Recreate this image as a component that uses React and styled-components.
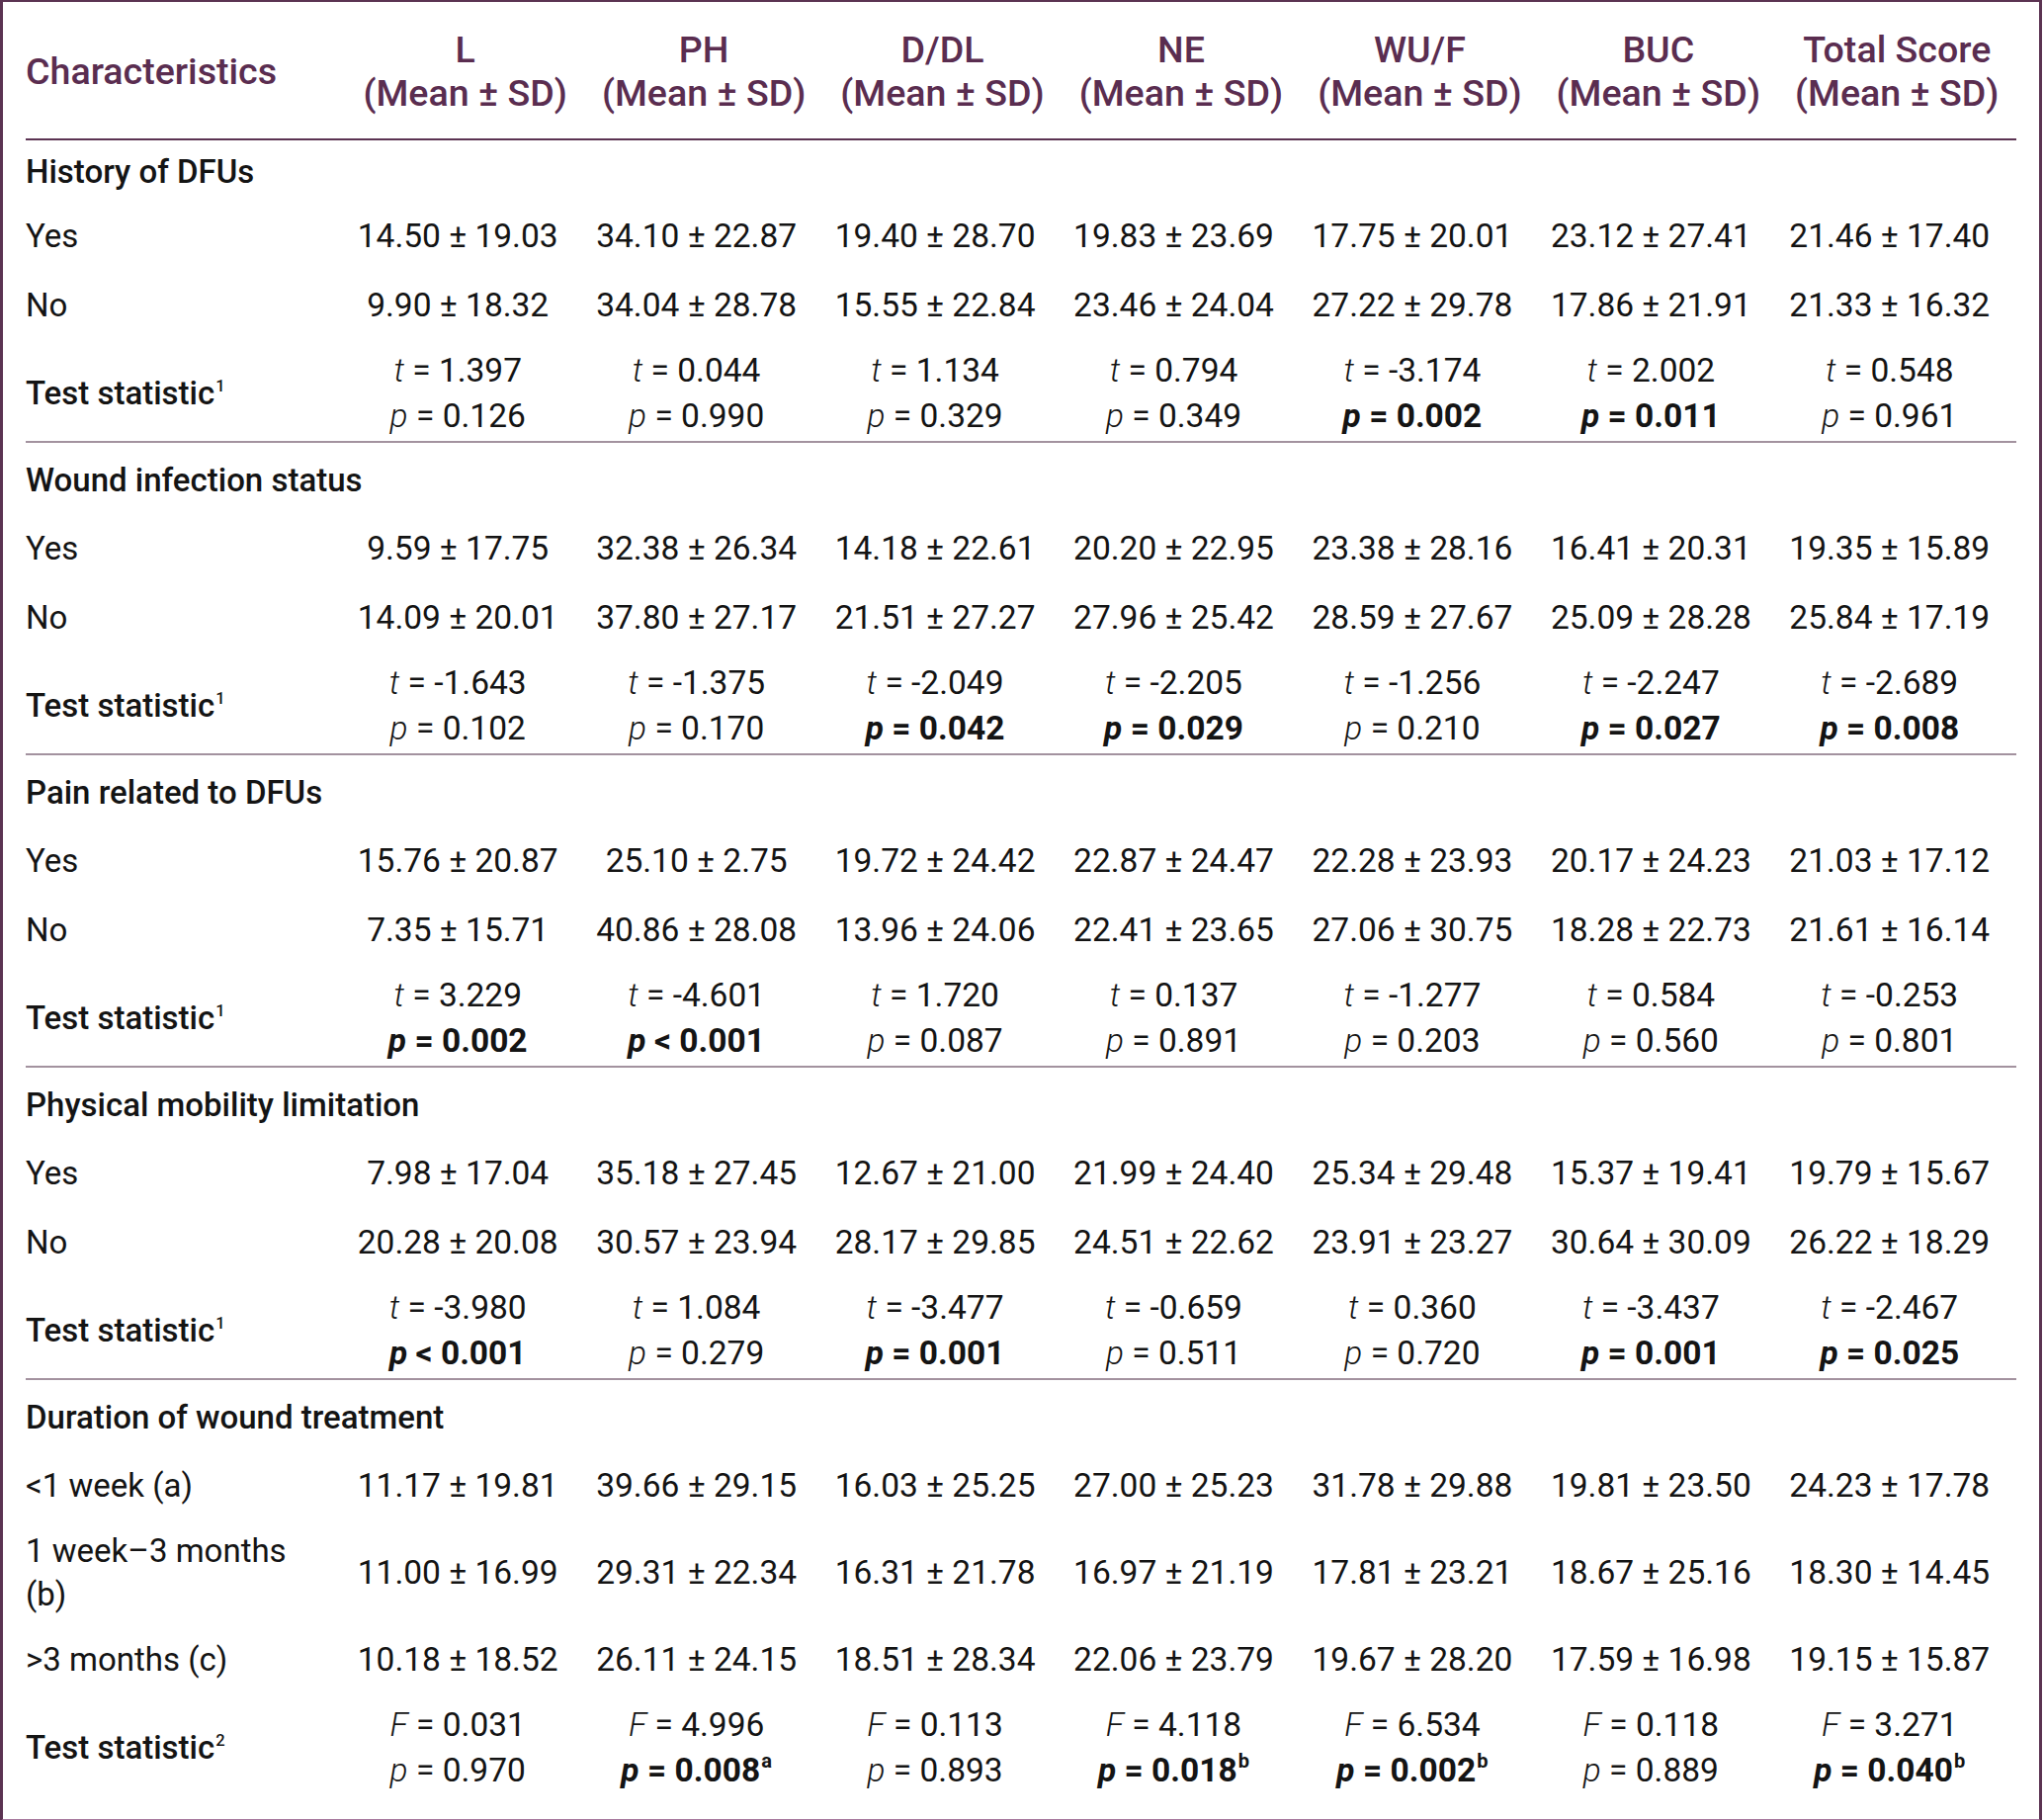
import React from 'react';
import styled, { createGlobalStyle } from 'styled-components';

const GlobalStyle = createGlobalStyle`
    body {
        margin: 0;
        background: #ffffff;
        font-family: Roboto, "Liberation Sans", sans-serif;
    }
`;

const columns = ['L', 'PH', 'D/DL', 'NE', 'WU/F', 'BUC', 'Total Score'];

const sections = [
    {
        title: 'History of DFUs',
        rows: [
            ['Yes', ['14.50 ± 19.03', '34.10 ± 22.87', '19.40 ± 28.70', '19.83 ± 23.69', '17.75 ± 20.01', '23.12 ± 27.41', '21.46 ± 17.40']],
            ['No', ['9.90 ± 18.32', '34.04 ± 28.78', '15.55 ± 22.84', '23.46 ± 24.04', '27.22 ± 29.78', '17.86 ± 21.91', '21.33 ± 16.32']],
        ],
        note: '1',
        letter: 't',
        stats: [
            ['1.397', '= 0.126'], ['0.044', '= 0.990'], ['1.134', '= 0.329'], ['0.794', '= 0.349'],
            ['-3.174', '= 0.002', true], ['2.002', '= 0.011', true], ['0.548', '= 0.961'],
        ],
    },
    {
        title: 'Wound infection status',
        rows: [
            ['Yes', ['9.59 ± 17.75', '32.38 ± 26.34', '14.18 ± 22.61', '20.20 ± 22.95', '23.38 ± 28.16', '16.41 ± 20.31', '19.35 ± 15.89']],
            ['No', ['14.09 ± 20.01', '37.80 ± 27.17', '21.51 ± 27.27', '27.96 ± 25.42', '28.59 ± 27.67', '25.09 ± 28.28', '25.84 ± 17.19']],
        ],
        note: '1',
        letter: 't',
        stats: [
            ['-1.643', '= 0.102'], ['-1.375', '= 0.170'], ['-2.049', '= 0.042', true], ['-2.205', '= 0.029', true],
            ['-1.256', '= 0.210'], ['-2.247', '= 0.027', true], ['-2.689', '= 0.008', true],
        ],
    },
    {
        title: 'Pain related to DFUs',
        rows: [
            ['Yes', ['15.76 ± 20.87', '25.10 ± 2.75', '19.72 ± 24.42', '22.87 ± 24.47', '22.28 ± 23.93', '20.17 ± 24.23', '21.03 ± 17.12']],
            ['No', ['7.35 ± 15.71', '40.86 ± 28.08', '13.96 ± 24.06', '22.41 ± 23.65', '27.06 ± 30.75', '18.28 ± 22.73', '21.61 ± 16.14']],
        ],
        note: '1',
        letter: 't',
        stats: [
            ['3.229', '= 0.002', true], ['-4.601', '< 0.001', true], ['1.720', '= 0.087'], ['0.137', '= 0.891'],
            ['-1.277', '= 0.203'], ['0.584', '= 0.560'], ['-0.253', '= 0.801'],
        ],
    },
    {
        title: 'Physical mobility limitation',
        rows: [
            ['Yes', ['7.98 ± 17.04', '35.18 ± 27.45', '12.67 ± 21.00', '21.99 ± 24.40', '25.34 ± 29.48', '15.37 ± 19.41', '19.79 ± 15.67']],
            ['No', ['20.28 ± 20.08', '30.57 ± 23.94', '28.17 ± 29.85', '24.51 ± 22.62', '23.91 ± 23.27', '30.64 ± 30.09', '26.22 ± 18.29']],
        ],
        note: '1',
        letter: 't',
        stats: [
            ['-3.980', '< 0.001', true], ['1.084', '= 0.279'], ['-3.477', '= 0.001', true], ['-0.659', '= 0.511'],
            ['0.360', '= 0.720'], ['-3.437', '= 0.001', true], ['-2.467', '= 0.025', true],
        ],
    },
    {
        title: 'Duration of wound treatment',
        rows: [
            ['<1 week (a)', ['11.17 ± 19.81', '39.66 ± 29.15', '16.03 ± 25.25', '27.00 ± 25.23', '31.78 ± 29.88', '19.81 ± 23.50', '24.23 ± 17.78']],
            ['1 week–3 months (b)', ['11.00 ± 16.99', '29.31 ± 22.34', '16.31 ± 21.78', '16.97 ± 21.19', '17.81 ± 23.21', '18.67 ± 25.16', '18.30 ± 14.45']],
            ['>3 months (c)', ['10.18 ± 18.52', '26.11 ± 24.15', '18.51 ± 28.34', '22.06 ± 23.79', '19.67 ± 28.20', '17.59 ± 16.98', '19.15 ± 15.87']],
        ],
        note: '2',
        letter: 'F',
        stats: [
            ['0.031', '= 0.970'], ['4.996', '= 0.008', true, 'a'], ['0.113', '= 0.893'], ['4.118', '= 0.018', true, 'b'],
            ['6.534', '= 0.002', true, 'b'], ['0.118', '= 0.889'], ['3.271', '= 0.040', true, 'b'],
        ],
    },
];

function App() {
    return (
        <>
            <GlobalStyle />
            <Frame>
                <Table>
                    <colgroup>
                        <col style={{ width: 324 }} />
                        {columns.map((c) => <col key={c} />)}
                    </colgroup>
                    <thead>
                        <tr>
                            <HeadCell $left>Characteristics</HeadCell>
                            {columns.map((c) => (
                                <HeadCell key={c}>{c}<br />(Mean ± SD)</HeadCell>
                            ))}
                        </tr>
                    </thead>
                    <tbody>
                        {sections.map((s, si) => {
                            const divider = si < sections.length - 1;
                            return (
                                <React.Fragment key={s.title}>
                                    <tr>
                                        <TitleCell colSpan={8} $first={si === 0}>{s.title}</TitleCell>
                                    </tr>
                                    {s.rows.map(([label, values]) => (
                                        <tr key={label}>
                                            <LabelCell $wrap={label.length > 14}>{label}</LabelCell>
                                            {values.map((v, i) => <ValueCell key={i}>{v}</ValueCell>)}
                                        </tr>
                                    ))}
                                    <tr>
                                        <StatLabel $divider={divider}>
                                            Test statistic<Note>{s.note}</Note>
                                        </StatLabel>
                                        {s.stats.map(([stat, p, bold, sup], i) => (
                                            <StatCell key={i} $divider={divider}>
                                                <div><Var>{s.letter}</Var> = {stat}</div>
                                                <PLine $bold={bold}>
                                                    <Var $bold={bold}>p</Var> {p}{sup && <Sup>{sup}</Sup>}
                                                </PLine>
                                            </StatCell>
                                        ))}
                                    </tr>
                                </React.Fragment>
                            );
                        })}
                    </tbody>
                </Table>
            </Frame>
        </>
    );
}

const Frame = styled.div`
    box-sizing: border-box;
    width: 2066px;
    border-top: 2px solid #5b3352;
    border-left: 3px solid #5b3352;
    border-right: 3px solid #5b3352;
    border-bottom: 3px solid #a97b9f;
    padding: 0 23px 24px 23px;
    background: #ffffff;
`;

const Table = styled.table`
    width: 2014px;
    table-layout: fixed;
    border-collapse: collapse;
    font-family: Roboto, "Liberation Sans", sans-serif;
    font-size: 33.5px;
    color: #141414;
`;

const HeadCell = styled.th`
    padding: 26px 0 24px 0;
    font-size: 37.6px;
    line-height: 44px;
    font-weight: 500;
    color: #5a2d50;
    text-align: ${(p) => (p.$left ? 'left' : 'center')};
    vertical-align: middle;
    white-space: nowrap;
    border-bottom: 2px solid #5b3352;
`;

const TitleCell = styled.td`
    padding: ${(p) => (p.$first ? '10px 0 8px 0' : '16px 0 12px 0')};
    font-size: 33px;
    line-height: 44px;
    font-weight: 500;
    text-align: left;
`;

const LabelCell = styled.td`
    padding: ${(p) => (p.$wrap ? '9px 30px 9px 0' : '13px 0')};
    font-size: 33px;
    line-height: 44px;
    font-weight: 400;
    text-align: left;
    vertical-align: middle;
`;

const ValueCell = styled.td`
    padding: 13px 15px 13px 0;
    line-height: 44px;
    text-align: center;
    vertical-align: middle;
    white-space: nowrap;
`;

const StatLabel = styled.td`
    padding: 8px 0 2px 0;
    font-size: 33px;
    line-height: 46px;
    font-weight: 500;
    text-align: left;
    vertical-align: middle;
    border-bottom: ${(p) => (p.$divider ? '2px solid #a3929f' : 'none')};
`;

const Note = styled.sup`
    font-size: 0.5em;
    line-height: 0;
    vertical-align: 0.8em;
    margin-left: 1px;
`;

const StatCell = styled.td`
    padding: 8px 15px 2px 0;
    line-height: 46px;
    text-align: center;
    vertical-align: middle;
    white-space: nowrap;
    border-bottom: ${(p) => (p.$divider ? '2px solid #a3929f' : 'none')};
`;

const PLine = styled.div`
    font-weight: ${(p) => (p.$bold ? 700 : 400)};
`;

const Var = styled.span`
    font-style: italic;
    font-weight: ${(p) => (p.$bold ? 700 : 300)};
`;

const Sup = styled.sup`
    font-size: 0.6em;
    line-height: 0;
    vertical-align: 0.7em;
    margin-left: 1px;
`;

export default App;
